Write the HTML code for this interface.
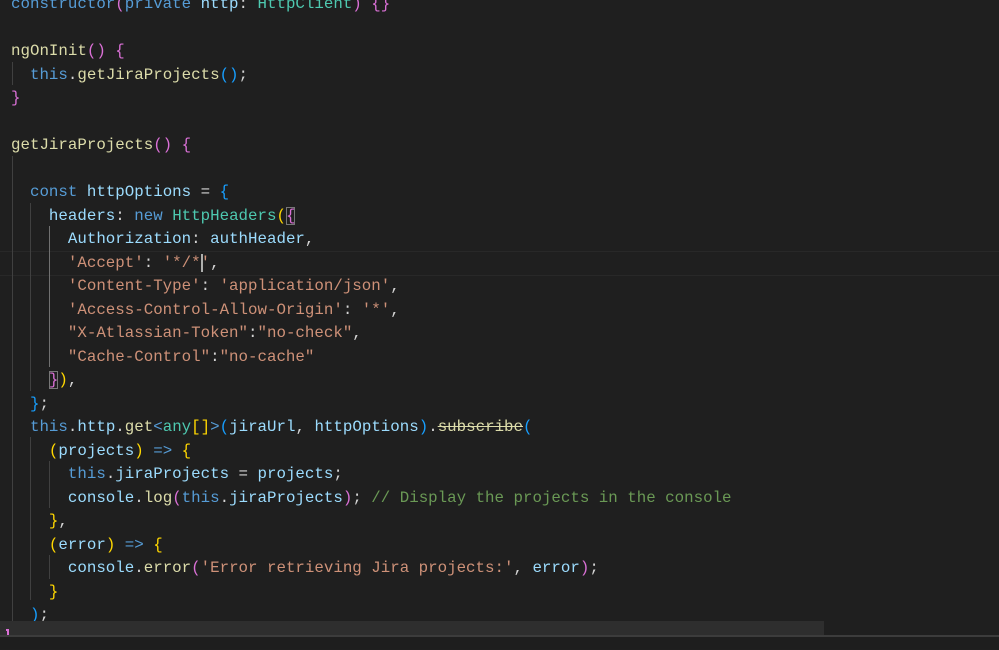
<!DOCTYPE html>
<html><head><meta charset="utf-8"><style>
html,body{margin:0;padding:0;width:999px;height:649px;overflow:hidden;background:#1f1f1f;}
.ed{position:absolute;left:0;top:0;width:999px;height:649px;font-family:"Liberation Mono",monospace;font-size:15.8px;color:#d4d4d4;}
.ls{position:absolute;left:0;top:1px;width:999px;height:649px;}
.l{position:absolute;left:11px;height:23.5px;line-height:23.5px;white-space:pre;}
.k{color:#569cd6}.v{color:#9cdcfe}.f{color:#dcdcaa}.s{color:#ce9178}.c{color:#4ec9b0}.cm{color:#6a9955}
.g{color:#ffd700}.p{color:#da70d6}.b{color:#179fff}
.ig{position:absolute;width:1px;background:#404040;}
.cur{position:absolute;left:0;width:999px;top:251px;height:23px;border-top:1px solid #282828;border-bottom:1px solid #282828;}
</style></head><body><div class="ed">
<div class="cur"></div>
<div class="ig" style="left:12px;top:62px;height:23px"></div>
<div class="ig" style="left:12px;top:156px;height:465px"></div>
<div class="ig" style="left:30px;top:203px;height:188px"></div>
<div class="ig" style="left:49px;top:226px;height:141px;background:#707070"></div>
<div class="ig" style="left:30px;top:437px;height:163px"></div>
<div class="ig" style="left:49px;top:461px;height:47px"></div>
<div class="ig" style="left:49px;top:555px;height:24px"></div>
<div class="ls">
<div class="l" style="top:-8px"><span class="k">constructor</span><span class="p">(</span><span class="k">private</span> <span class="v">http</span>: <span class="c">HttpClient</span><span class="p">)</span> <span class="p">{}</span></div>
<div class="l" style="top:39px"><span class="f">ngOnInit</span><span class="p">()</span> <span class="p">{</span></div>
<div class="l" style="top:62.5px">  <span class="k">this</span>.<span class="f">getJiraProjects</span><span class="b">()</span>;</div>
<div class="l" style="top:86px"><span class="p">}</span></div>
<div class="l" style="top:133px"><span class="f">getJiraProjects</span><span class="p">()</span> <span class="p">{</span></div>
<div class="l" style="top:180px">  <span class="k">const</span> <span class="v">httpOptions</span> = <span class="b">{</span></div>
<div class="l" style="top:203.5px">    <span class="v">headers</span>: <span class="k">new</span> <span class="c">HttpHeaders</span><span class="g">(</span><span class="p" style="outline:1px solid #777;outline-offset:-1px">{</span></div>
<div class="l" style="top:227px">      <span class="v">Authorization</span>: <span class="v">authHeader</span>,</div>
<div class="l" style="top:250.5px">      <span class="s">'Accept'</span>: <span class="s">'*/<span style="border-right:2px solid #aeafad;margin-right:-2px">*</span>'</span>,</div>
<div class="l" style="top:274px">      <span class="s">'Content-Type'</span>: <span class="s">'application/json'</span>,</div>
<div class="l" style="top:297.5px">      <span class="s">'Access-Control-Allow-Origin'</span>: <span class="s">'*'</span>,</div>
<div class="l" style="top:321px">      <span class="s">"X-Atlassian-Token"</span>:<span class="s">"no-check"</span>,</div>
<div class="l" style="top:344.5px">      <span class="s">"Cache-Control"</span>:<span class="s">"no-cache"</span></div>
<div class="l" style="top:368px">    <span class="p" style="outline:1px solid #777;outline-offset:-1px">}</span><span class="g">)</span>,</div>
<div class="l" style="top:391.5px">  <span class="b">}</span>;</div>
<div class="l" style="top:415px">  <span class="k">this</span>.<span class="v">http</span>.<span class="f">get</span><span class="k">&lt;</span><span class="c">any</span><span class="g">[]</span><span class="k">&gt;</span><span class="b">(</span><span class="v">jiraUrl</span>, <span class="v">httpOptions</span><span class="b">)</span>.<span class="f" style="text-decoration:line-through">subscribe</span><span class="b">(</span></div>
<div class="l" style="top:438.5px">    <span class="g">(</span><span class="v">projects</span><span class="g">)</span> <span class="k">=&gt;</span> <span class="g">{</span></div>
<div class="l" style="top:462px">      <span class="k">this</span>.<span class="v">jiraProjects</span> = <span class="v">projects</span>;</div>
<div class="l" style="top:485.5px">      <span class="v">console</span>.<span class="f">log</span><span class="p">(</span><span class="k">this</span>.<span class="v">jiraProjects</span><span class="p">)</span>; <span class="cm">// Display the projects in the console</span></div>
<div class="l" style="top:509px">    <span class="g">}</span>,</div>
<div class="l" style="top:532.5px">    <span class="g">(</span><span class="v">error</span><span class="g">)</span> <span class="k">=&gt;</span> <span class="g">{</span></div>
<div class="l" style="top:556px">      <span class="v">console</span>.<span class="f">error</span><span class="p">(</span><span class="s">'Error retrieving Jira projects:'</span>, <span class="v">error</span><span class="p">)</span>;</div>
<div class="l" style="top:579.5px">    <span class="g">}</span></div>
<div class="l" style="top:603px">  <span class="b">)</span>;</div>
</div>
<div style="position:absolute;left:0;top:621px;width:824px;height:15px;background:#2e2e2e"></div>
<div style="position:absolute;left:6px;top:629px;width:3px;height:7px;border-top:2px solid #da70d6;border-right:2px solid #da70d6;box-sizing:border-box"></div>
<div style="position:absolute;left:0;top:635px;width:999px;height:2px;background:#3c3c3c"></div>
<div style="position:absolute;left:0;top:637px;width:999px;height:12px;background:#1e1e1e"></div>
</div></body></html>
